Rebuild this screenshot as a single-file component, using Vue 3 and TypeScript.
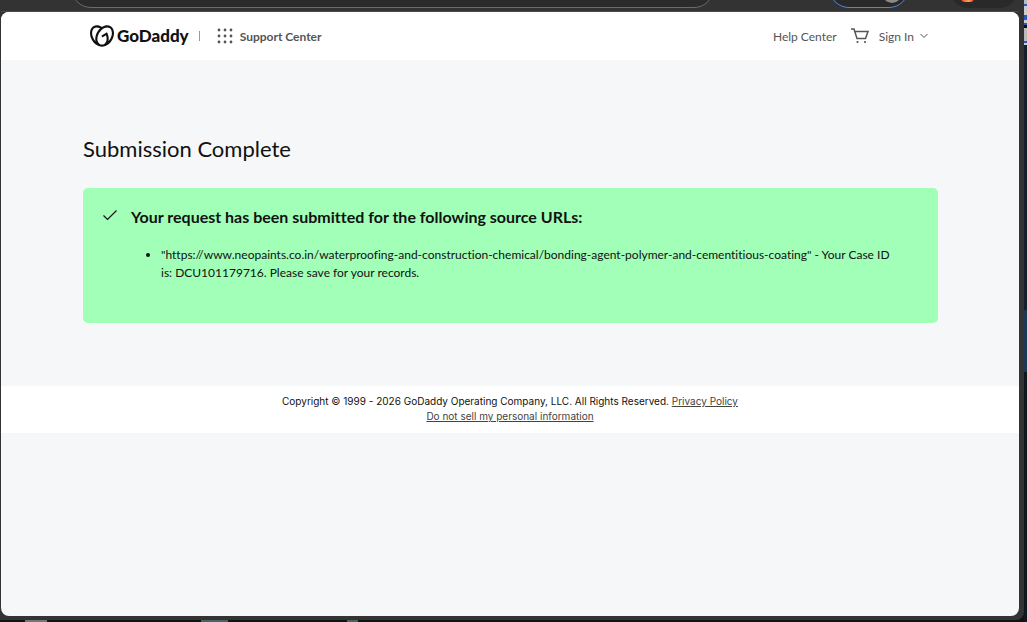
<script setup lang="ts">
const copyright = 'Copyright © 1999 - 2026 GoDaddy Operating Company, LLC. All Rights Reserved.'
const cases: { url: string; id: string }[] = [
  {
    url: 'https://www.neopaints.co.in/waterproofing-and-construction-chemical/bonding-agent-polymer-and-cementitious-coating',
    id: 'DCU101179716',
  },
]
const dots = [2, 8, 14]
</script>

<template>
  <div class="desktop">
    <div class="window">
      <div class="toolbar" aria-hidden="true">
        <div class="omnibox"></div>
        <div class="pill profile"><span class="avatar"></span></div>
        <div class="pill menu"><span class="flame"></span></div>
      </div>
      <div class="page">
        <header class="header">
          <div class="side">
            <a class="logo" href="#" aria-label="GoDaddy home">
              <svg width="24" height="24" viewBox="0 0 24 24" fill="#111">
                <path d="M20.702 2.29c-2.494-1.554-5.778-1.187-8.706.654C9.076 1.104 5.79.736 3.3 2.29c-3.941 2.463-4.42 8.806-1.07 14.167 2.47 3.954 6.333 6.269 9.77 6.226 3.439.043 7.301-2.273 9.771-6.226 3.347-5.361 2.872-11.704-1.069-14.167zM4.042 15.328a12.838 12.838 0 01-1.546-3.541 10.12 10.12 0 01-.336-3.338c.15-1.98.956-3.524 2.27-4.345 1.315-.822 3.052-.87 4.903-.137.281.113.556.24.825.382A15.11 15.11 0 007.5 7.54c-2.035 3.255-2.655 6.878-1.945 9.765a13.247 13.247 0 01-1.514-1.98zm17.465-3.541a12.866 12.866 0 01-1.547 3.54 13.25 13.25 0 01-1.513 1.984c.635-2.589.203-5.76-1.353-8.734a.39.39 0 00-.563-.153l-4.852 3.032a.397.397 0 00-.126.546l.712 1.139a.395.395 0 00.547.126l3.145-1.965c.101.306.203.606.28.916.296 1.086.41 2.214.335 3.337-.15 1.982-.956 3.525-2.27 4.347a4.437 4.437 0 01-2.25.65h-.101a4.432 4.432 0 01-2.25-.65c-1.314-.822-2.121-2.365-2.27-4.347-.074-1.123.039-2.251.335-3.337a13.212 13.212 0 014.05-6.482 10.148 10.148 0 012.849-1.765c1.845-.733 3.586-.685 4.9.137 1.316.822 2.122 2.365 2.271 4.345a10.146 10.146 0 01-.332 3.334z" />
              </svg>
              <span class="wordmark">GoDaddy</span>
            </a>
            <span class="divider"></span>
            <a class="support" href="#">
              <svg width="16" height="16" viewBox="0 0 16 16" fill="#555">
                <template v-for="y in dots" :key="y">
                  <circle v-for="x in dots" :key="x" :cx="x" :cy="y" r="1.400" />
                </template>
              </svg>
              Support Center
            </a>
          </div>
          <nav class="side">
            <a class="help" href="#">Help Center</a>
            <a class="cart" href="#" aria-label="Cart">
              <svg width="18" height="16" viewBox="0 0 18 16" fill="none" stroke="#555" stroke-width="1.500">
                <path d="M0 1H3L6 10.500H14.500L17 3.500H4" />
                <circle cx="6.500" cy="14" r="1.100" fill="#555" stroke="none" />
                <circle cx="14" cy="14" r="1.100" fill="#555" stroke="none" />
              </svg>
            </a>
            <button class="signin" type="button">
              Sign In
              <svg width="8" height="6" viewBox="0 0 8 6" fill="none" stroke="#555"><path d="M0.500 1L4 4.500L7.500 1" /></svg>
            </button>
          </nav>
        </header>
        <main class="main">
          <h1>Submission Complete</h1>
          <section class="notice">
            <svg class="check" width="15" height="12" viewBox="0 0 15 12" fill="none" stroke="#111" stroke-width="1.200">
              <path d="M0.500 6.500L4.500 10.500L13.500 1.500" />
            </svg>
            <div>
              <h2>Your request has been submitted for the following source URLs:</h2>
              <ul>
                <li v-for="c in cases" :key="c.id">"{{ c.url }}" - Your Case ID <span class="case">is: {{ c.id }}.</span> Please save for your records.</li>
              </ul>
            </div>
          </section>
        </main>
        <footer class="footer">
          <div>{{ copyright }} <a href="#">Privacy Policy</a></div>
          <div><a href="#">Do not sell my personal information</a></div>
        </footer>
      </div>
    </div>
  </div>
</template>

<style>
body { margin: 0; }
</style>

<style scoped>
* { box-sizing: border-box; }
a { color: inherit; text-decoration: none; }
svg { display: block; flex: none; }
.desktop {
  min-height: 100vh;
  display: flex;
  padding: 0 3px 2px 0;
  background:
    linear-gradient(90deg, transparent 25px, #777 25px 47px, transparent 47px 201px, #4d606c 201px 228px, transparent 228px 347px, #4d606c 347px 358px, transparent 358px) bottom / 100% 2px no-repeat,
    linear-gradient(#bbb 4px, #2858b8 4px 6px, #ccc 6px 15px, #2858b8 15px 20px, #ccc 20px 23px, #2858b8 23px 25px, #111 25px 28px, #bbb 28px 41px, #2858b8 41px 43px, #ccc 43px 45px, #16202b 45px 310px, #1d3654 310px 372px, #10171e 372px) right / 3px 100% no-repeat,
    #101214;
  font-family: Lato, "Liberation Sans", sans-serif;
  font-variant-ligatures: none;
  color: #111;
}
.window {
  flex: 1;
  display: flex;
  flex-direction: column;
  padding: 0 5px 4px 1px;
  background: #333;
  border-radius: 0 0 8px 0;
}
.toolbar { height: 12px; overflow: hidden; display: flex; padding: 0 0 0 70px; border-bottom: 1px solid #4a4a4a; }
.omnibox { flex: 1; height: 40px; margin-top: -32px; border: 1px solid #6b6b6b; border-radius: 20px; background: #2b2b2b; }
.pill { height: 40px; margin-top: -32px; border-radius: 20px; background: #292929; display: flex; align-items: flex-end; }
.profile { width: 80px; margin-left: 115px; border: 1px solid #4f87e0; justify-content: flex-end; padding: 0 6px 4px 0; }
.avatar { width: 20px; height: 20px; border-radius: 50%; background: #8d8985; }
.menu { width: 70px; margin-left: 40px; padding: 0 0 6px 12px; }
.flame { width: 13px; height: 12px; border-radius: 4px; background: linear-gradient(90deg, #e8463a, #ff9f55 60%, #e8463a); }
.page { flex: 1; background: #f5f7f8; border-radius: 8px; overflow: hidden; }
.header {
  height: 48px;
  display: flex;
  justify-content: space-between;
  align-items: center;
  padding: 0 91px 0 89px;
  background: #fff;
  color: #555;
  font-size: 12px;
}
.side, .logo, .support { display: flex; align-items: center; }
.logo { gap: 3px; color: #111; }
.wordmark { font-size: 17px; line-height: 20px; font-weight: 900; }
.divider { width: 1px; height: 10px; margin: 0 17px 0 10px; background: #999; }
.support { gap: 7px; font-weight: 700; }
.cart { margin: 0 10px 0 14px; }
.signin { display: flex; align-items: center; gap: 6px; padding: 0; border: 0; background: none; color: inherit; font: inherit; }
.main { padding: 75px 81px 63px 82px; }
h1 { margin: 0; font-size: 22px; line-height: 28px; font-weight: 400; }
.notice {
  display: flex;
  gap: 13px;
  margin-top: 25px;
  padding: 19px 20px 41px;
  background: #a1ffb8;
  border-radius: 5px;
}
.check { margin-top: 2px; }
h2 { margin: 0; font-size: 16px; line-height: 20px; font-weight: 700; }
ul { margin: 19px 0 0; padding-left: 30px; font-size: 12px; line-height: 18px; }
.case { white-space: nowrap; }
.footer { padding: 8px 16px 9px; background: #fff; text-align: center; font-family: Inter, sans-serif; font-size: 10px; line-height: 15px; }
.footer a { color: #444; text-decoration: underline; }
</style>
